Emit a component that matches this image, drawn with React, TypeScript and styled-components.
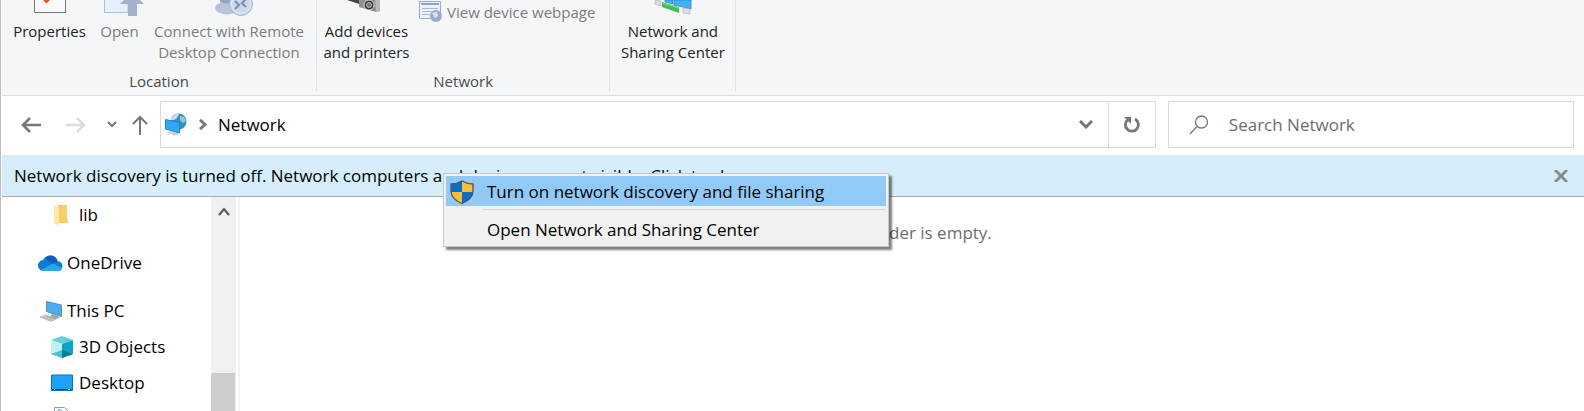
import React from "react";
import styled, { createGlobalStyle } from "styled-components";

const GlobalStyle = createGlobalStyle`
  * { box-sizing: border-box; }
  html, body, #root { height: 100%; }
  body { margin: 0; overflow: hidden; background: #fff; }
  button, input { font: inherit; color: inherit; }
`;

const Window = styled.main`
  position: relative;
  display: flex;
  flex-direction: column;
  height: 100%;
  border-left: 1px solid #bdbdbd;
  padding-left: 1px;
  font: 17px/24px "Open Sans", "Segoe UI", sans-serif;
  color: #000;
`;

const Ribbon = styled.header`
  display: flex;
  flex-shrink: 0;
  height: 96px;
  padding-bottom: 3px;
  background: #f5f6f7;
  border-bottom: 1px solid #dadbdc;
  font-size: 15px;
  line-height: 21px;
`;

const Group = styled.section`
  display: flex;
  flex-direction: column;
  justify-content: space-between;
  border-right: 1px solid #e2e3e4;
`;

const GroupItems = styled.div`
  display: flex;
  align-items: flex-start;
`;

const GroupLabel = styled.div`
  text-align: center;
  color: #4a4a4a;
`;

const RibbonButton = styled.button<{ $width: number }>`
  display: flex;
  flex-direction: column;
  align-items: center;
  width: ${(p) => p.$width}px;
  padding: 0;
  border: 0;
  background: none;
  white-space: nowrap;
  color: #222;
  &:disabled { color: #7c7c7c; }
  svg { flex-shrink: 0; }
`;

const WebpageButton = styled.button`
  display: flex;
  align-items: center;
  gap: 4px;
  height: 24px;
  padding: 0 14px 0 3px;
  border: 0;
  background: none;
  white-space: nowrap;
  &:disabled { color: #7c7c7c; }
`;

const AddressRow = styled.nav`
  display: flex;
  flex-shrink: 0;
  align-items: center;
  height: 59px;
  padding: 0 10px 2px 11px;
`;

const IconButton = styled.button<{ $width: number }>`
  display: flex;
  align-items: center;
  justify-content: center;
  width: ${(p) => p.$width}px;
  height: 45px;
  padding: 0;
  border: 0;
  background: none;
`;

const AddressBox = styled.div`
  display: flex;
  flex: 996;
  align-items: center;
  height: 47px;
  border: 1px solid #d9d9d9;
`;

const Crumb = styled.button`
  flex: 1;
  height: 45px;
  padding: 0 0 0 3px;
  border: 0;
  background: none;
  text-align: left;
`;

const Refresh = styled(IconButton)`
  border-left: 1px solid #d9d9d9;
`;

const SearchBox = styled.label`
  display: flex;
  flex: 385;
  align-items: center;
  gap: 20px;
  height: 47px;
  margin-left: 12px;
  padding-left: 20px;
  border: 1px solid #d9d9d9;
`;

const SearchInput = styled.input`
  flex: 1;
  min-width: 0;
  padding: 0;
  border: 0;
  outline: 0;
  background: none;
  &::placeholder { color: #6d6d6d; opacity: 1; }
`;

const InfoBar = styled.div`
  display: flex;
  flex-shrink: 0;
  align-items: center;
  justify-content: space-between;
  height: 42px;
  padding: 0 6px 0 12px;
  background: #d6eefb;
  border-bottom: 1px solid #a9adb0;
`;

const Body = styled.div`
  display: flex;
  flex: 1;
  min-height: 0;
  overflow: hidden;
`;

const Tree = styled.ul`
  width: 209px;
  margin: 0;
  padding: 0;
  list-style: none;
`;

const TreeItem = styled.li<{ $level: number; $space?: boolean }>`
  display: flex;
  align-items: center;
  gap: ${(p) => (p.$level === 2 ? 5 : 4)}px;
  height: 36px;
  margin-bottom: ${(p) => (p.$space ? 12 : 0)}px;
  padding-left: ${(p) => (p.$level === 2 ? 48 : 36)}px;
`;

const ScrollTrack = styled.div`
  display: flex;
  flex-direction: column;
  justify-content: space-between;
  width: 25px;
  background: #f0f0f0;
`;

const ScrollUp = styled(IconButton)`
  height: 30px;
`;

const ScrollThumb = styled.div`
  height: 38px;
  margin-right: 1px;
  background: #cdcdcd;
`;

const Content = styled.section`
  flex: 1;
  margin-left: 2px;
  padding-top: 24px;
  border-left: 2px solid #f3f3f3;
  text-align: center;
  color: #6d6d6d;
`;

const Menu = styled.div`
  position: absolute;
  top: 173px;
  left: 442px;
  width: 446px;
  padding: 2px;
  background: #f1f1f1;
  border: 1px solid #c8c8c8;
  box-shadow: 3px 3px 2px rgba(0, 0, 0, 0.5);
`;

const MenuItem = styled.button<{ $active?: boolean }>`
  display: flex;
  align-items: center;
  width: 100%;
  height: 30px;
  padding: 1px 0 0;
  border: 0;
  text-align: left;
  background: ${(p) => (p.$active ? "#91c9f7" : "none")};
`;

const MenuIcon = styled.span`
  display: flex;
  width: 41px;
  padding-left: 4px;
`;

const MenuRule = styled.hr`
  height: 1px;
  margin: 3px 0 4px 37px;
  border: 0;
  background: #d5d5d5;
`;

const PropertiesIcon = () => (
  <svg width="34" height="21" viewBox="0 0 34 21">
    <path d="M1.500 0V12.500H32.500V0" fill="#fafafa" stroke="#777" />
    <path d="M10 0H17L13.500 3.500z" fill="#f2501e" />
  </svg>
);
const OpenIcon = () => (
  <svg width="50" height="21" viewBox="0 0 50 21">
    <path d="M9.500 0V12.500H33V0" fill="#e6effc" stroke="#a9bfe0" />
    <path d="M29 0H45L49 4H42V16H33V4H25z" fill="#a3b1cb" />
  </svg>
);
const RemoteIcon = () => (
  <svg width="50" height="21" viewBox="0 0 50 21">
    <ellipse cx="23" cy="8" rx="12" ry="6.500" fill="#b9c5dc" />
    <path d="M16 0H30V3Q22 5 16 2z" fill="#96a5c1" />
    <circle cx="37" cy="4" r="11.500" fill="#cbd9ee" stroke="#a7b5ce" />
    <circle cx="37" cy="4" r="9.500" fill="none" stroke="#e4ecf8" />
    <path d="M31 1L35 5L31 9M42 -1L38 3L42 7" fill="none" stroke="#8090b0" strokeWidth="2.200" />
  </svg>
);
const CameraIcon = () => (
  <svg width="40" height="21" viewBox="0 0 40 21">
    <path d="M0 0L12 4V0z" fill="#444" />
    <path d="M12 0H33V11L29 12L12 7z" fill="#8f8f8f" />
    <path d="M28 0H33V11L29 12z" fill="#b9b9b9" />
    <circle cx="22" cy="5" r="5" fill="#333" stroke="#ddd" />
    <circle cx="22" cy="5" r="2.500" fill="#777" stroke="#bbb" />
  </svg>
);
const WebpageIcon = () => (
  <svg width="24" height="22" viewBox="0 0 24 22">
    <path d="M.5 .5H21.500V17.500H.5z" fill="#edf3fc" stroke="#98abce" />
    <path d="M2 3H20" stroke="#8fa4cd" strokeWidth="2" />
    <path d="M3 7.500H19M3 10.500H14M3 13.500H12" stroke="#a9bad8" />
    <circle cx="17" cy="15" r="6" fill="#9cadcb" />
    <path d="M13 12l5-1 1 4-3 2z" fill="#dbe5f3" />
  </svg>
);
const SharingIcon = () => (
  <svg width="40" height="21" viewBox="0 0 40 21">
    <path d="M12 0H20V4L12 2zM21 0H38V9L21 5z" fill="#3fb2f7" stroke="#2780ba" strokeWidth=".7" />
    <path d="M2 0L8 1V6L2 4zM30 8L37 9V14L30 13z" fill="#dedede" stroke="#b5b5b5" strokeWidth=".7" />
    <path d="M9 2L26 7V13L9 7z" fill="#43bd51" />
    <path d="M9 3L26 8" stroke="#8be08e" />
  </svg>
);

const ArrowIcon = ({ color = "#777", flip = false }) => (
  <svg width="20" height="16" viewBox="0 0 20 16">
    <path d={flip ? "M0 8H18M11 1L18 8L11 15" : "M20 8H2M9 1L2 8L9 15"} fill="none" stroke={color} strokeWidth="2.600" />
  </svg>
);
const StrokeIcon = ({ d, w, h, color = "#777", sw = 3 }: { d: string; w: number; h: number; color?: string; sw?: number }) => (
  <svg width={w} height={h} viewBox={`0 0 ${w} ${h}`}>
    <path d={d} fill="none" stroke={color} strokeWidth={sw} />
  </svg>
);
const NetworkIcon = () => (
  <svg width="22" height="23" viewBox="0 0 22 23">
    <circle cx="13.500" cy="8.500" r="8" fill="#3b8fb5" />
    <path d="M7 4Q11 0 14 1L12 5L9 7H6z" fill="#b9e2f0" />
    <path d="M15 3l4 1 2 4-3 2-3-3z" fill="#8cc9df" />
    <path d="M4 18L13 20V22L9 22.500L3 20z" fill="#cdd0d3" />
    <path d="M.5 6.500L14.500 9.500V20L.5 16z" fill="#33a8f4" stroke="#1c86d1" />
  </svg>
);
const RefreshIcon = () => (
  <svg width="18" height="18" viewBox="0 0 18 18">
    <path d="M12 3A6.500 6.500 0 1 1 5 3.500" fill="none" stroke="#777" strokeWidth="2.800" />
    <path d="M1 1H8V8z" fill="#777" />
  </svg>
);
const SearchIcon = () => (
  <svg width="20" height="20" viewBox="0 0 20 20">
    <circle cx="12.500" cy="7" r="6" fill="none" stroke="#777" strokeWidth="1.300" />
    <path d="M8 11.500L1 19" stroke="#777" strokeWidth="1.300" />
  </svg>
);
const ShieldIcon = () => (
  <svg width="24" height="24" viewBox="0 0 24 24">
    <path d="M12 1Q7 4 1 4V11Q1 19 12 23.500Z" fill="#0a6cc9" />
    <path d="M12 1Q17 4 23 4V11Q23 19 12 23.500Z" fill="#fdbd3c" />
    <path d="M1 12H12V23.500Q2 20 1 12Z" fill="#fdbd3c" />
    <path d="M23 12H12V23.500Q22 20 23 12Z" fill="#0a6cc9" />
    <path d="M12 1Q17 4 23 4V11Q23 19 12 23.500Q1 19 1 11V4Q7 4 12 1Z" fill="none" stroke="#555" strokeWidth="1.300" />
  </svg>
);
const FolderIcon = () => (
  <svg width="24" height="24" viewBox="0 0 24 24">
    <path d="M8 2H17V16H18V20H7z" fill="#f2cf6b" />
    <path d="M4 2L9 5V23L4 20z" fill="#ffe9a6" />
  </svg>
);
const CloudIcon = () => (
  <svg width="25" height="17" viewBox="0 0 25 17">
    <path d="M6 16A5.500 5.500 0 0 1 5 5Q8 0 13 .5Q18 1 19.500 6Q24 6.500 24.500 11Q24 16 20 16Z" fill="#0f7bd6" />
    <path d="M7 3.500Q9 .5 13 .5Q18 1 19.500 6L14 9z" fill="#0a5fb4" />
    <path d="M3 15L15 8.500L24 13Q23 16 20 16H6Q4 16 3 15z" fill="#28a8ea" />
  </svg>
);
const PcIcon = () => (
  <svg width="25" height="23" viewBox="0 0 25 23">
    <path d="M8.500 1.500L23.500 5V16.500L8.500 11.500z" fill="#47adf0" stroke="#668aa6" />
    <path d="M14 14L20 16L22 18L17 19L12 17z" fill="#9aa3aa" />
    <path d="M2 17L8 15L18 19L13 21.500z" fill="#d0d4d8" stroke="#a4a9ae" strokeWidth=".7" />
    <path d="M5 17L14 20M8 16L16 19" stroke="#969ca2" strokeWidth=".7" />
  </svg>
);
const CubeIcon = () => (
  <svg width="24" height="24" viewBox="0 0 24 24">
    <path d="M12 1L23 5L12 9L1 5z" fill="#63cfdc" />
    <path d="M1 5L12 9V23L1 19z" fill="#c1f0f4" />
    <path d="M23 5L12 9V23L23 19z" fill="#12a3c4" />
    <path d="M1 19L12 15V23z" fill="#45c4d6" />
    <path d="M12 15L23 19L12 23z" fill="#087a92" />
  </svg>
);
const DesktopIcon = () => (
  <svg width="24" height="18" viewBox="0 0 24 18">
    <path d="M1.500 1H22.500V16.500H1.500z" fill="#1ea2fb" stroke="#0c6fb8" />
    <path d="M2 15.500H22" stroke="#07466f" /><path d="M4 15.500h1M18 15.500h2" stroke="#fff" />
  </svg>
);
const DocumentIcon = () => (
  <svg width="24" height="24" viewBox="0 0 24 24">
    <path d="M4.500 .5H14.500L18.500 4.500V23.500H4.500z" fill="#fff" stroke="#999" />
    <path d="M7 5L9 2L12 4" fill="none" stroke="#4ba5d5" />
  </svg>
);

export default function App() {
  return (
    <>
      <GlobalStyle />
      <Window>
        <Ribbon>
          <Group>
            <GroupItems>
              <RibbonButton $width={95}><PropertiesIcon />Properties</RibbonButton>
              <RibbonButton $width={45} disabled><OpenIcon />Open</RibbonButton>
              <RibbonButton $width={174} disabled><RemoteIcon />Connect with Remote<br />Desktop Connection</RibbonButton>
            </GroupItems>
            <GroupLabel>Location</GroupLabel>
          </Group>
          <Group>
            <GroupItems>
              <RibbonButton $width={99}><CameraIcon />Add devices<br />and printers</RibbonButton>
              <WebpageButton disabled><WebpageIcon />View device webpage</WebpageButton>
            </GroupItems>
            <GroupLabel>Network</GroupLabel>
          </Group>
          <Group>
            <RibbonButton $width={125}><SharingIcon />Network and<br />Sharing Center</RibbonButton>
          </Group>
        </Ribbon>
        <AddressRow aria-label="Navigation">
          <IconButton $width={35} aria-label="Back"><ArrowIcon /></IconButton>
          <IconButton $width={56} aria-label="Forward"><ArrowIcon flip color="#ddd" /></IconButton>
          <IconButton $width={15} aria-label="Recent locations"><StrokeIcon w={10} h={7} d="M1 1L5 5L9 1" sw={2} /></IconButton>
          <IconButton $width={41} aria-label="Up"><StrokeIcon w={16} h={20} d="M8 20V2M1 9L8 2L15 9" sw={2} /></IconButton>
          <AddressBox>
            <IconButton $width={30} aria-label="Locations"><NetworkIcon /></IconButton>
            <IconButton $width={24} aria-label="Expand"><StrokeIcon w={11} h={11} d="M2 1L7 5.5L2 10" /></IconButton>
            <Crumb>Network</Crumb>
            <IconButton $width={44} aria-label="Previous locations"><StrokeIcon w={14} h={10} d="M1 1L7 7L13 1" /></IconButton>
            <Refresh $width={47} aria-label="Refresh"><RefreshIcon /></Refresh>
          </AddressBox>
          <SearchBox aria-label="Search Network">
            <SearchIcon />
            <SearchInput placeholder="Search Network" />
          </SearchBox>
        </AddressRow>
        <InfoBar>
          <span>Network discovery is turned off. Network computers and devices are not visible. Click to change...</span>
          <IconButton $width={34} aria-label="Close"><StrokeIcon w={14} h={12} d="M1 0L13 12M13 0L1 12" color="#8c8c8c" /></IconButton>
        </InfoBar>
        <Body>
          <Tree>
            <TreeItem $level={2} $space><FolderIcon />lib</TreeItem>
            <TreeItem $level={1} $space><CloudIcon />OneDrive</TreeItem>
            <TreeItem $level={1}><PcIcon />This PC</TreeItem>
            <TreeItem $level={2}><CubeIcon />3D Objects</TreeItem>
            <TreeItem $level={2}><DesktopIcon />Desktop</TreeItem>
            <TreeItem $level={2} aria-label="Documents"><DocumentIcon /></TreeItem>
          </Tree>
          <ScrollTrack>
            <ScrollUp $width={25} aria-label="Scroll up"><StrokeIcon w={12} h={10} d="M1 8L6 2L11 8" sw={2} color="#555" /></ScrollUp>
            <ScrollThumb />
          </ScrollTrack>
          <Content>This folder is empty.</Content>
        </Body>
        <Menu>
          <MenuItem $active><MenuIcon><ShieldIcon /></MenuIcon>Turn on network discovery and file sharing</MenuItem>
          <MenuRule />
          <MenuItem><MenuIcon />Open Network and Sharing Center</MenuItem>
        </Menu>
      </Window>
    </>
  );
}
